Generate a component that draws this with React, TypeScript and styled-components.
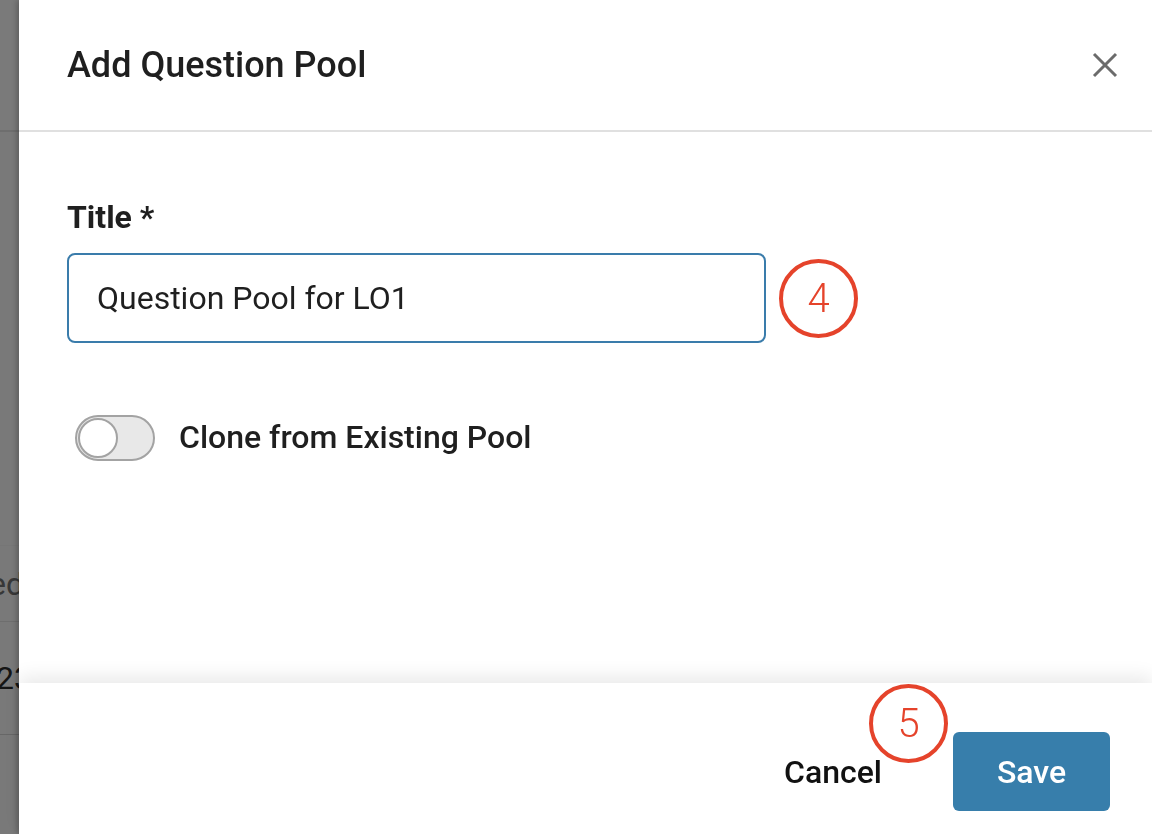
import React, { useState } from 'react';
import styled, { createGlobalStyle } from 'styled-components';

const GlobalStyle = createGlobalStyle`
  html, body {
    margin: 0;
    padding: 0;
    height: 100%;
    overflow: hidden;
  }
  body {
    font-family: Roboto, "Liberation Sans", Arial, sans-serif;
    color: #1f1f1f;
  }
`;

// the list page sitting behind the drawer
const Page = styled.div`
  height: 834px;
  background: #f2f2f2;
  display: flex;
  flex-direction: column;
`;

const PageHeader = styled.div`
  height: 130px;
  border-bottom: 2px solid #dcdcdc;
  background: #f4f4f4;
`;

const PageRow = styled.div<{ $height: number; $tone?: string }>`
  height: ${(p) => p.$height}px;
  border-bottom: 1px solid ${(p) => p.$tone || '#e2e2e2'};
  display: flex;
  align-items: center;
  font-size: 32px;
  white-space: nowrap;
`;

// right-aligned cell: the start of the word runs off the left edge
const PageCell = styled.span<{ $end: number; $muted?: boolean }>`
  width: ${(p) => p.$end}px;
  display: flex;
  justify-content: flex-end;
  color: ${(p) => (p.$muted ? '#6f6f6f' : '#2a2a2a')};
`;

const Overlay = styled.div`
  position: fixed;
  inset: 0;
  background: rgba(0, 0, 0, 0.5);
`;

const Drawer = styled.div`
  position: fixed;
  top: 0;
  bottom: 0;
  left: 19px;
  right: 0;
  background: #fff;
  display: flex;
  flex-direction: column;
  box-shadow: -2px 0 6px rgba(0, 0, 0, 0.25);
`;

const Header = styled.div`
  height: 130px;
  flex-shrink: 0;
  border-bottom: 2px solid #e0e0e0;
  display: flex;
  align-items: center;
  justify-content: space-between;
  padding: 0 23px 0 48px;
`;

const Heading = styled.h2`
  margin: 0;
  font-size: 36px;
  font-weight: 500;
  color: #1f1f1f;
`;

const CloseButton = styled.button`
  width: 48px;
  height: 48px;
  border: none;
  background: none;
  padding: 0;
  display: flex;
  align-items: center;
  justify-content: center;
  cursor: pointer;
`;

const Body = styled.div`
  flex: 1;
  padding: 66px 48px 0;
  display: flex;
  flex-direction: column;
`;

const Label = styled.label`
  font-size: 32px;
  font-weight: 700;
  color: #1f1f1f;
  line-height: 38px;
  margin-bottom: 17px;
`;

const FieldRow = styled.div`
  display: flex;
  align-items: center;
  gap: 13px;
`;

const TextInput = styled.input`
  width: 699px;
  height: 90px;
  box-sizing: border-box;
  border: 2px solid #3a7cab;
  border-radius: 8px;
  padding: 0 28px;
  font-family: Roboto, "Liberation Sans", Arial, sans-serif;
  font-size: 32px;
  color: #1f1f1f;
  outline: none;
`;

const Marker = styled.div<{ $size: number }>`
  width: ${(p) => p.$size}px;
  height: ${(p) => p.$size}px;
  box-sizing: border-box;
  border: 4px solid #e5432b;
  border-radius: 50%;
  display: flex;
  align-items: center;
  justify-content: center;
  color: #e5432b;
  font-size: 40px;
  font-weight: 300;
  flex-shrink: 0;
`;

const FloatingMarker = styled(Marker)`
  position: absolute;
  left: 850px;
  top: 1px;
`;

const ToggleRow = styled.div`
  display: flex;
  align-items: center;
  gap: 24px;
  margin-top: 72px;
  padding-left: 8px;
`;

const Track = styled.button<{ $on: boolean }>`
  width: 80px;
  height: 46px;
  box-sizing: border-box;
  border-radius: 23px;
  border: 2px solid #a3a3a3;
  background: ${(p) => (p.$on ? '#3a7cab' : '#e8e8e8')};
  padding: 0;
  display: flex;
  align-items: center;
  justify-content: ${(p) => (p.$on ? 'flex-end' : 'flex-start')};
  cursor: pointer;
`;

const Knob = styled.span`
  width: 40px;
  height: 40px;
  box-sizing: border-box;
  border-radius: 50%;
  background: #fff;
  border: 2px solid #a3a3a3;
  margin: 0 1px;
`;

const ToggleText = styled.span`
  font-size: 32px;
  font-weight: 500;
  color: #1f1f1f;
  margin-top: -2px;
`;

const Footer = styled.div`
  height: 151px;
  flex-shrink: 0;
  box-sizing: border-box;
  position: relative;
  display: flex;
  justify-content: flex-end;
  align-items: flex-start;
  padding: 49px 42px 0 0;
  background: #fff;
  box-shadow: 0 -6px 18px rgba(0, 0, 0, 0.09);
`;

const TextButton = styled.button`
  height: 79px;
  border: none;
  background: none;
  font-family: Roboto, "Liberation Sans", Arial, sans-serif;
  font-size: 32px;
  font-weight: 500;
  color: #111;
  padding: 0;
  margin-right: 71px;
  cursor: pointer;
`;

const PrimaryButton = styled.button`
  width: 157px;
  height: 79px;
  border: none;
  border-radius: 6px;
  background: #377eab;
  color: #fff;
  font-family: Roboto, "Liberation Sans", Arial, sans-serif;
  font-size: 32px;
  font-weight: 500;
  cursor: pointer;
`;

const CloseIcon = () => (
  <svg width="26" height="26" viewBox="0 0 26 26">
    <path d="M2 2 L24 24 M24 2 L2 24" stroke="#6b6b6b" strokeWidth="3" />
  </svg>
);

export default function App() {
  const [title, setTitle] = useState('Question Pool for LO1');
  const [clone, setClone] = useState(false);

  return (
    <>
      <GlobalStyle />
      <Page>
        <PageHeader />
        <PageRow $height={413} $tone="#ececec" />
        <PageRow $height={75} $tone="#dcdcdc">
          <PageCell $end={24} $muted>Created</PageCell>
        </PageRow>
        <PageRow $height={112} $tone="#cfcfcf">
          <PageCell $end={32}>2023</PageCell>
        </PageRow>
      </Page>
      <Overlay />
      <Drawer>
        <Header>
          <Heading>Add Question Pool</Heading>
          <CloseButton aria-label="Close">
            <CloseIcon />
          </CloseButton>
        </Header>
        <Body>
          <Label htmlFor="pool-title">Title *</Label>
          <FieldRow>
            <TextInput id="pool-title" value={title} onChange={(e) => setTitle(e.target.value)} />
            <Marker $size={79}>4</Marker>
          </FieldRow>
          <ToggleRow>
            <Track $on={clone} onClick={() => setClone(!clone)} aria-pressed={clone}>
              <Knob />
            </Track>
            <ToggleText>Clone from Existing Pool</ToggleText>
          </ToggleRow>
        </Body>
        <Footer>
          <FloatingMarker $size={79}>5</FloatingMarker>
          <TextButton>Cancel</TextButton>
          <PrimaryButton>Save</PrimaryButton>
        </Footer>
      </Drawer>
    </>
  );
}
